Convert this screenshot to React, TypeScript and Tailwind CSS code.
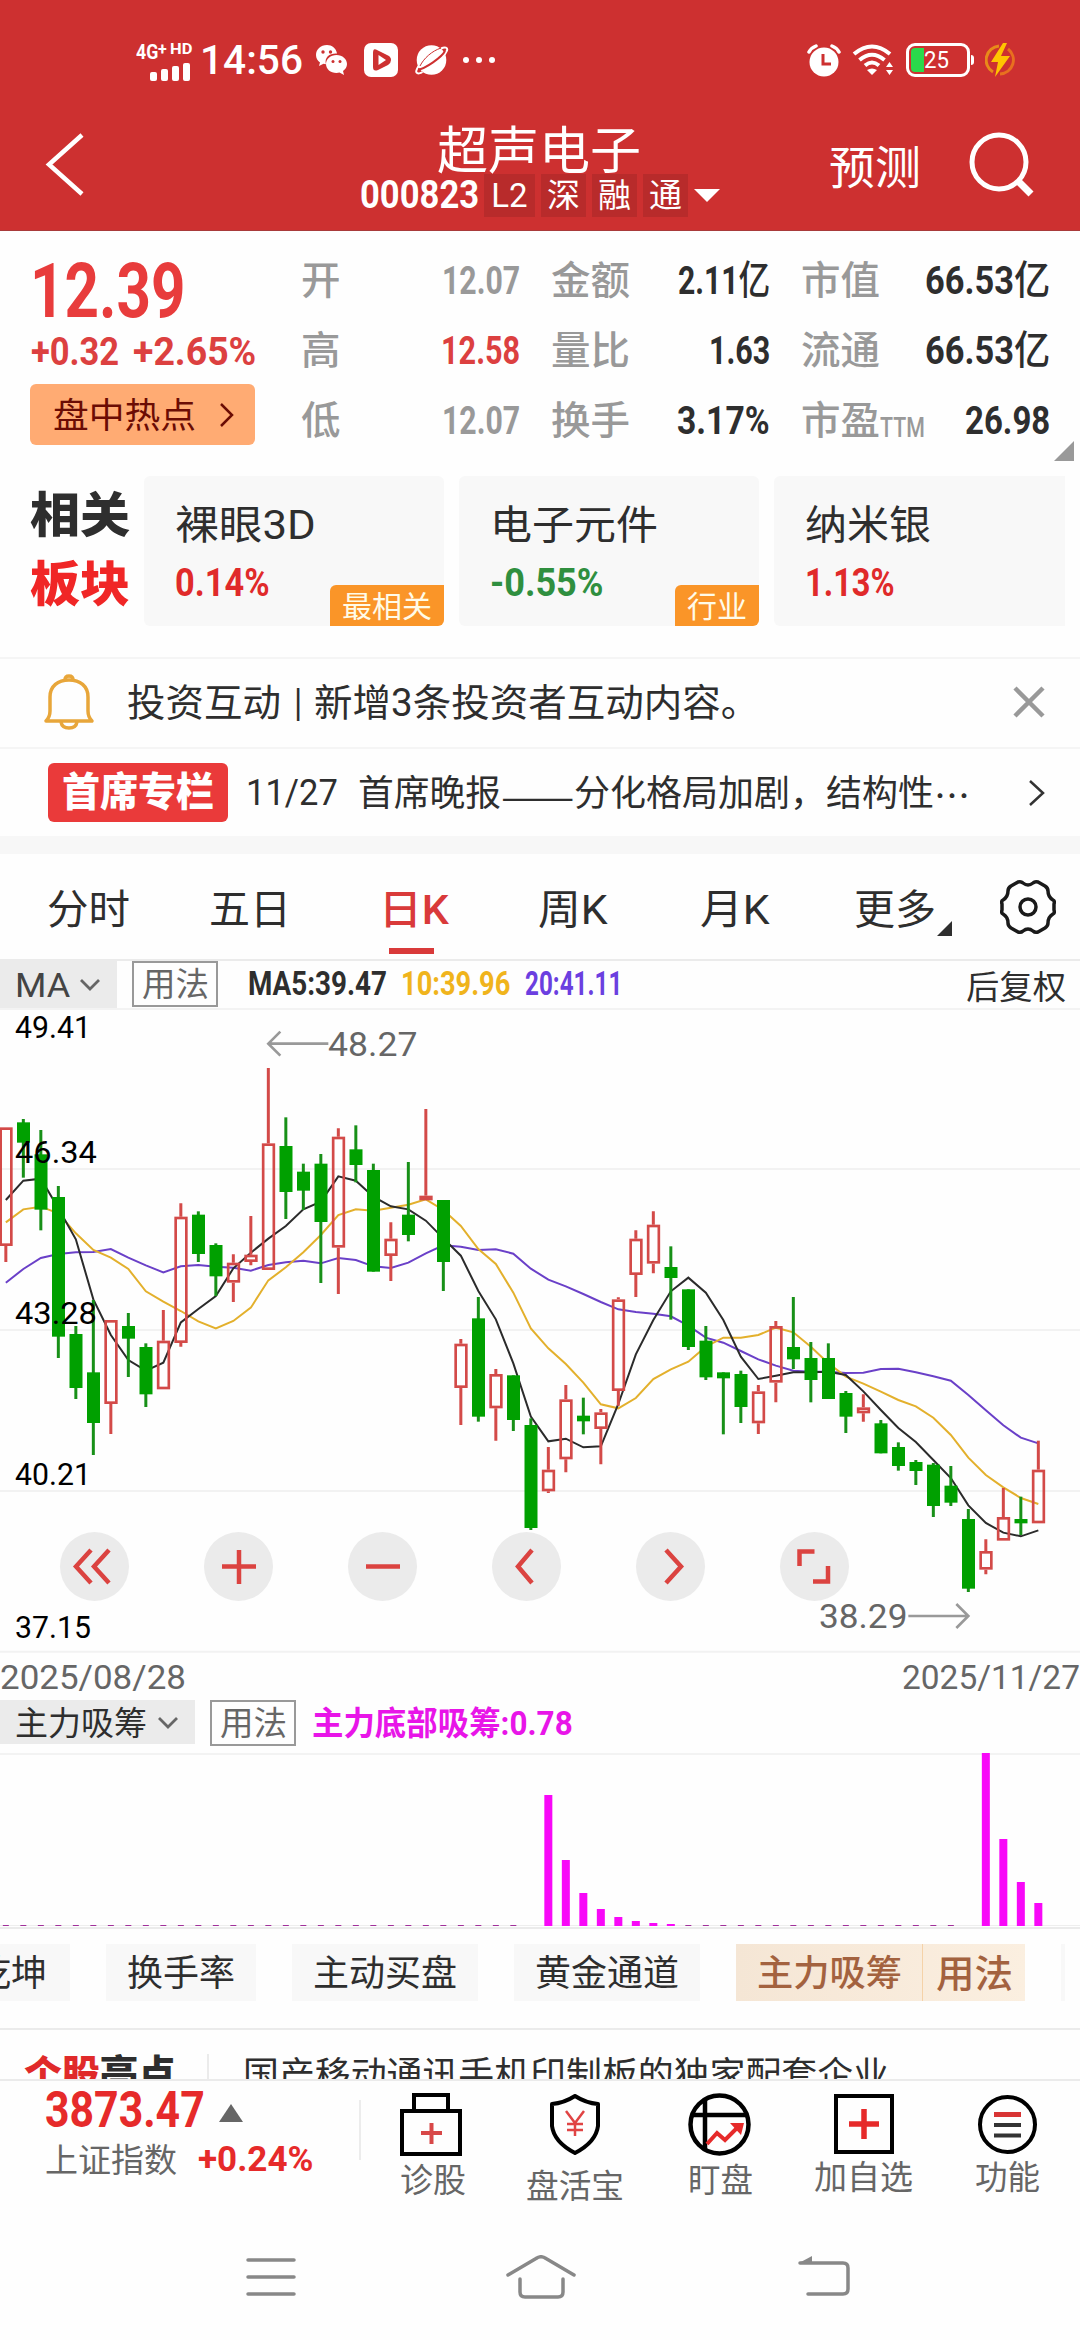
import { useLayoutEffect, useRef, useState } from "react";
import type { ReactNode } from "react";
import { clsx } from "clsx";

// One line of text, stretched or squeezed to an exact width.
function Fit({ w, className, children }: { w: number; className?: string; children: ReactNode }) {
  const ref = useRef<HTMLSpanElement>(null);
  const [scale, setScale] = useState(1);
  useLayoutEffect(() => {
    if (ref.current) setScale(w / ref.current.offsetWidth);
  }, [w]);
  return (
    <span className={clsx("flex shrink-0 leading-none", className)} style={{ width: w }}>
      <span ref={ref} className="shrink-0 origin-left whitespace-nowrap" style={{ transform: `scaleX(${scale})` }}>
        {children}
      </span>
    </span>
  );
}

function StatusBar() {
  return (
    <div className="flex h-[120px] items-center pl-[136px] text-white">
      <div className="flex h-[36px] w-[56px] flex-col justify-between">
        <div className="flex items-start font-bold">
          <Fit w={22} className="text-[21px]">4G</Fit>
          <Fit w={9} className="text-[16px]">+</Fit>
          <Fit w={22} className="ml-[3px] text-[15px]">HD</Fit>
        </div>
        <div className="mb-0.5 ml-[14px] flex items-end gap-1">
          <i className="h-[9px] w-[7px] rounded-[2px] bg-white" />
          <i className="h-[12px] w-[7px] rounded-[2px] bg-white" />
          <i className="h-[15px] w-[7px] rounded-[2px] bg-white" />
          <i className="h-[18px] w-[7px] rounded-[2px] bg-white" />
        </div>
      </div>
      <Fit w={103} className="ml-[8px] text-[41px] font-medium">14:56</Fit>
      <svg className="ml-[12px]" width="33" height="32" viewBox="0 0 33 32">
        <path d="M12 1C5.500 1 1 5.500 1 11c0 3 1.500 5.800 4 7.500L4 22l4.500-2.200 2.500.5C9 13 15 9 22 9.500 21 4 17 1 12 1Z" fill="#fff" />
        <path d="M21.500 11C15.500 11 11 15 11 20s4.500 9 10.500 9l3-.5L29 31l-1-4c2.500-1.700 4-4 4-7 0-5-4.500-9-10.500-9Z" fill="#fff" />
        <g fill="#cd3030">
          <circle cx="8" cy="8" r="1.700" /><circle cx="15.500" cy="8" r="1.700" />
          <circle cx="18" cy="17.500" r="1.500" /><circle cx="25" cy="17.500" r="1.500" />
        </g>
      </svg>
      <svg className="ml-[16px]" width="34" height="34" viewBox="0 0 34 34">
        <rect width="34" height="34" rx="7" fill="#fff" />
        <path d="M12 6.500 24 12.500q3 1.500 3 4.500t-3 5L14 27q-5 2-5-3V10q0-5 3-3.500Z" fill="#cd3030" />
        <path d="m14.500 12 7.500 5-7.500 5Z" fill="#fff" />
      </svg>
      <svg className="ml-[17px]" width="34" height="32" viewBox="0 0 34 32">
        <circle cx="16.500" cy="16" r="14.800" fill="#fff" />
        <path d="M26 4.500c4-2 7-1 6 2-1 2-2 4-4 6M5.500 20c-3 3-5 7-4 8.500s4 1 6-.5" fill="none" stroke="#fff" strokeWidth="2" />
        <path d="M3 25.500C10 25 27 13 30 7" fill="none" stroke="#cd3030" strokeWidth="2" />
        <path d="M5 22C9 14 17 7 26 4" fill="none" stroke="#cd3030" strokeWidth="1" />
      </svg>
      <div className="ml-[14px] flex gap-[7px]">
        <i className="size-[6px] rounded-full bg-white" />
        <i className="size-[6px] rounded-full bg-white" />
        <i className="size-[6px] rounded-full bg-white" />
      </div>
      <svg className="ml-[312px]" width="34" height="33" viewBox="0 0 34 33">
        <circle cx="17" cy="18" r="14.500" fill="#fff" />
        <path d="M2 8q2-4 7-6M32 8q-2-4-7-6" stroke="#fff" strokeWidth="3.500" strokeLinecap="round" fill="none" />
        <path d="M16 10v10h8" stroke="#cd3030" strokeWidth="3" fill="none" />
      </svg>
      <svg className="ml-[11px]" width="42" height="32" viewBox="0 0 42 32" fill="none" stroke="#fff" strokeWidth="4">
        <path d="M2 10Q20-5 38 10M7.500 16Q20 5.500 32.500 16M13 21.500q7-6 14 0" />
        <path d="m15 26 5 5 5-5q-5-3-10 0Z" fill="#fff" stroke="none" />
        <path d="m34 23 3.500-5 3.500 5Zm0 3h7l-3.500 5Z" fill="#fff" stroke="none" />
      </svg>
      <div className="ml-[12px] flex h-[34px] w-[64px] items-center rounded-[9px] border-[3px] border-white p-[2px]">
        <i className="h-full w-[13px] rounded-l-[4px] bg-[#2bd94b]" />
        <Fit w={25} className="text-[24px]">25</Fit>
      </div>
      <i className="ml-px h-[10px] w-[3px] rounded-r bg-white" />
      <svg className="ml-[11px]" width="30" height="34" viewBox="0 0 30 34">
        <path d="M14 3A14 14 0 0 0 8 29" fill="none" stroke="#e88a1a" strokeWidth="3" />
        <path d="M23 6a14 14 0 0 1-8 25" fill="none" stroke="#e8701f" strokeWidth="3" />
        <path d="M18 0 6 19h7l-3 15L25 13h-9l6-13Z" fill="#ffc400" />
      </svg>
    </div>
  );
}

function Header() {
  return (
    <header className="h-[231px] border-b border-[#a83a3a] bg-[#cd3030] text-white">
      <StatusBar />
      <div className="flex items-start">
        <svg className="mt-[12px] ml-[45px]" width="40" height="65" viewBox="0 0 40 65">
          <path d="M37 3 4 32.500 37 62" fill="none" stroke="#fff" strokeWidth="4.500" />
        </svg>
        <div className="ml-[275px] w-[362px]">
          <Fit w={204} className="ml-[77px] mt-[6px] text-[51px]">超声电子</Fit>
          <div className="-mt-[3px] flex items-center">
            <Fit w={119} className="text-[39px] font-bold">000823</Fit>
            <div className="ml-[5px] flex gap-[6px] text-[33px] leading-none">
              <span className="flex h-[43px] w-[51px] items-center justify-center bg-[#b82b2b]">L2</span>
              <span className="flex h-[43px] w-[45px] items-center justify-center bg-[#b82b2b]">深</span>
              <span className="flex h-[43px] w-[45px] items-center justify-center bg-[#b82b2b]">融</span>
              <span className="flex h-[43px] w-[45px] items-center justify-center bg-[#b82b2b]">通</span>
            </div>
            <svg className="ml-[6px]" width="26" height="13" viewBox="0 0 26 13"><path d="M0 0h26L13 13Z" fill="#fff" /></svg>
          </div>
        </div>
        <Fit w={92} className="mt-[25px] ml-[107px] text-[46px]">预测</Fit>
        <svg className="mt-[12px] ml-[48px]" width="66" height="66" viewBox="0 0 66 66" fill="none" stroke="#fff" strokeWidth="5">
          <circle cx="30" cy="30" r="27" /><path d="m50 50 12 12" strokeWidth="7" />
        </svg>
      </div>
    </header>
  );
}

type Cell = { label: string; value: string; w: number; tone?: string; sub?: string; unit?: string };

const quoteCols: { className: string; cells: Cell[] }[] = [
  {
    className: "w-[219px]",
    cells: [
      { label: "开", value: "12.07", w: 78, tone: "text-[#999]" },
      { label: "高", value: "12.58", w: 79, tone: "text-[#dc4040]" },
      { label: "低", value: "12.07", w: 78, tone: "text-[#999]" },
    ],
  },
  {
    className: "ml-[31px] w-[219px]",
    cells: [
      { label: "金额", value: "2.11", unit: "亿", w: 92 },
      { label: "量比", value: "1.63", w: 61 },
      { label: "换手", value: "3.17%", w: 93 },
    ],
  },
  {
    className: "ml-[31px] w-[249px]",
    cells: [
      { label: "市值", value: "66.53", unit: "亿", w: 125 },
      { label: "流通", value: "66.53", unit: "亿", w: 125 },
      { label: "市盈", value: "26.98", w: 85, sub: "TTM" },
    ],
  },
];

function Quote() {
  return (
    <section className="flex h-[245px] pl-[30px]">
      <div className="w-[271px] text-[#e83c3c]">
        <Fit w={155} className="mt-[22px] text-[76px] font-bold">12.39</Fit>
        <div className="mt-[4px] flex pl-px text-[38px] font-bold text-[#dc4040]">
          <Fit w={88}>+0.32</Fit>
          <Fit w={123} className="ml-[14px]">+2.65%</Fit>
        </div>
        <div className="mt-[13px] flex h-[61px] w-[225px] items-center rounded-md bg-[#ffab73] pl-[23px] text-[#6b0c04]">
          <Fit w={143} className="mt-[4px] text-[35px]">盘中热点</Fit>
          <svg className="ml-[24px]" width="14" height="24" viewBox="0 0 14 24"><path d="m1 1 11 11L1 23" fill="none" stroke="currentColor" strokeWidth="2.500" /></svg>
        </div>
      </div>
      {quoteCols.map((col) => (
        <div key={col.className} className={clsx("mt-[15px]", col.className)}>
          {col.cells.map((c) => (
            <div key={c.label} className="flex h-[70px] items-center">
              <Fit w={c.label.length * 39.5} className="text-[39px] font-medium text-[#999]">{c.label}</Fit>
              {c.sub && <Fit w={45} className="mt-[14px] text-[27px] font-medium text-[#999]">{c.sub}</Fit>}
              <Fit w={c.w} className={clsx("ml-auto text-[38px] font-bold", c.tone ?? "text-[#2e2e2e]")}>
                {c.value}
                {c.unit && <span className="text-[40px] font-medium">{c.unit}</span>}
              </Fit>
            </div>
          ))}
        </div>
      ))}
      <svg className="mt-[210px] ml-[4px]" width="20" height="20" viewBox="0 0 20 20"><path d="M20 0v20H0Z" fill="#999" /></svg>
    </section>
  );
}

function Sectors() {
  return (
    <section className="flex h-[181px] pl-[30px]">
      <div className="w-[114px] text-[48px] font-black">
        <Fit w={100} className="mt-[16px] text-[#2e2e2e]">相关</Fit>
        <Fit w={100} className="mt-[21px] text-[#f02626]">板块</Fit>
      </div>
      <div className="flex w-[921px] gap-[15px] overflow-hidden">
        <SectorCard name="裸眼3D" nameW={141} pct="0.14%" pctW={95} tone="text-[#e02a2a]" tag="最相关" tagCls="w-[114px]" />
        <SectorCard name="电子元件" nameW={168} pct="-0.55%" pctW={114} tone="text-[#2f8f3f]" tag="行业" tagCls="w-[84px]" />
        <SectorCard name="纳米银" nameW={126} pct="1.13%" pctW={90} tone="text-[#e02a2a]" />
      </div>
    </section>
  );
}

function SectorCard(p: { name: string; nameW: number; pct: string; pctW: number; tone: string; tag?: string; tagCls?: string }) {
  return (
    <div className="relative h-[150px] w-[300px] shrink-0 rounded-md bg-[#f8f8f8] pl-[31px]">
      <Fit w={p.nameW} className="mt-[30px] text-[40px] text-[#2e2e2e]">{p.name}</Fit>
      <Fit w={p.pctW} className={clsx("mt-[18px] text-[38px] font-bold", p.tone)}>{p.pct}</Fit>
      {p.tag && (
        <span className={clsx("absolute right-0 bottom-0 flex h-[41px] items-center justify-center rounded-tl-md rounded-br-md bg-[#fa9528] pt-[2px] text-[30px] leading-none text-[#fffbe8]", p.tagCls)}>
          {p.tag}
        </span>
      )}
    </div>
  );
}

function Notices() {
  return (
    <section className="text-[#2e2e2e]">
      <div className="flex h-[90px] items-center border-t-2 border-[#f5f5f5] pl-[43px]">
        <svg className="-mt-[3px]" width="52" height="56" viewBox="0 0 52 56" fill="none" stroke="#e8a63a" strokeWidth="3.500">
          <path d="M3 47c3-3 4-6 4-10V23C7 12 15 6 26 6s19 6 19 17v14c0 4 1 7 4 10Z" strokeLinejoin="round" />
          <path d="M22 6q0-4 4-4t4 4M18 48q1 6 8 6t8-6" />
        </svg>
        <Fit w={154} className="ml-[32px] text-[38px]">投资互动</Fit>
        <Fit w={8} className="ml-[13px] text-[38px]">|</Fit>
        <Fit w={445} className="ml-[12px] text-[38px]">新增3条投资者互动内容。</Fit>
        <svg className="-mt-[3px] ml-[253px]" width="34" height="34" viewBox="0 0 34 34"><path d="m3 3 28 28M31 3 3 31" stroke="#999" strokeWidth="4.500" /></svg>
      </div>
      <div className="flex h-[89px] items-center border-t-2 border-[#f5f5f5] pl-[48px]">
        <div className="flex h-[59px] w-[180px] items-center justify-center rounded-md bg-[#ea3a3a]">
          <Fit w={152} className="text-[40px] font-black text-white">首席专栏</Fit>
        </div>
        <Fit w={92} className="ml-[18px] text-[36px]">11/27</Fit>
        <Fit w={143} className="ml-[20px] pt-[2px] text-[36px]">首席晚报</Fit>
        <Fit w={73} className="pt-[2px] font-['Noto_Sans_CJK_SC'] text-[36px]">——</Fit>
        <Fit w={360} className="pt-[2px] text-[36px]">分化格局加剧，结构性</Fit>
        <Fit w={36} className="pt-[2px] font-['Noto_Sans_CJK_SC'] text-[36px]">…</Fit>
        <svg className="ml-[58px]" width="18" height="26" viewBox="0 0 18 26"><path d="m2 1 13 12L2 25" fill="none" stroke="#333" strokeWidth="2.500" /></svg>
      </div>
      <div className="h-[18px] bg-[#f7f7f7]" />
    </section>
  );
}

function Tabs() {
  return (
    <nav className="flex h-[107px] items-center border-b-2 border-[#ebebeb] pt-[7px] pl-[47px] text-[41px] text-[#2e2e2e]">
      <Fit w={83}>分时</Fit>
      <Fit w={82} className="ml-[79px]">五日</Fit>
      <div className="relative ml-[88px] font-medium text-[#d93a3a]">
        <Fit w={70}>日K</Fit>
        <i className="absolute top-[58px] left-[10px] h-[6px] w-[45px] bg-[#d93a3a]" />
      </div>
      <Fit w={70} className="ml-[89px]">周K</Fit>
      <Fit w={70} className="ml-[92px]">月K</Fit>
      <Fit w={82} className="ml-[84px]">更多</Fit>
      <svg className="mt-[36px] ml-px" width="15" height="15" viewBox="0 0 15 15"><path d="M15 0v15H0Z" fill="#2e2e2e" /></svg>
      <svg className="-mt-[7px] ml-[48px]" width="56" height="56" viewBox="0 0 56 56" fill="none" stroke="#1a1a1a" strokeWidth="3.500" strokeLinejoin="round">
        <path d="M18 3q3-1 5 1 5 4 10 0 2-2 5-1l7 4q3 2 3 5 0 6 5 9 2 1 1 4v6q1 3-1 4-5 3-5 9 0 3-3 5l-7 4q-3 1-5-1-5-4-10 0-2 2-5 1l-7-4q-3-2-3-5 0-6-5-9-2-1-1-4v-6q-1-3 1-4 5-3 5-9 0-3 3-5Z" />
        <circle cx="28" cy="28" r="8" />
      </svg>
    </nav>
  );
}

function Chevron() {
  return (
    <svg width="22" height="13" viewBox="0 0 22 13"><path d="m2 2 9 9 9-9" fill="none" stroke="#666" strokeWidth="2.800" /></svg>
  );
}

function Usage() {
  return (
    <div className="flex h-[46px] w-[86px] items-center justify-center border-2 border-[#999] text-[#666]">
      <Fit w={67} className="text-[33px]">用法</Fit>
    </div>
  );
}

// Plot units are thirds of a pixel, measured from the top of the plot.
// [rising, high, body top, body bottom, low]
const candles: [number, number, number, number, number][] = [
  [1, 352, 352, 708, 756], [0, 327, 337, 398, 503], [0, 360, 433, 599, 661], [0, 528, 561, 980, 1044],
  [0, 948, 972, 1134, 1167], [0, 870, 1087, 1239, 1335], [1, 930, 930, 1182, 1272], [0, 909, 948, 986, 1101],
  [0, 1000, 1011, 1153, 1191], [1, 900, 992, 1138, 1138], [1, 580, 620, 999, 1010], [0, 604, 614, 732, 756],
  [0, 700, 705, 799, 858], [1, 733, 758, 818, 876], [1, 618, 734, 756, 766], [1, 174, 400, 780, 780],
  [0, 322, 408, 546, 627], [0, 461, 485, 542, 600], [0, 432, 461, 636, 819], [1, 355, 380, 713, 852],
  [0, 346, 418, 465, 517], [0, 461, 480, 785, 785], [1, 637, 686, 738, 813], [0, 456, 614, 675, 694],
  [1, 297, 557, 571, 571], [0, 570, 570, 756, 843], [1, 987, 1001, 1134, 1245], [0, 861, 925, 1220, 1235],
  [1, 1077, 1092, 1195, 1292], [0, 1096, 1096, 1230, 1263], [0, 1225, 1245, 1554, 1560], [1, 1311, 1379, 1444, 1449],
  [1, 1125, 1168, 1348, 1387], [0, 1163, 1217, 1234, 1273], [1, 1197, 1207, 1257, 1363], [1, 862, 868, 1143, 1187],
  [1, 661, 686, 795, 861], [1, 604, 644, 761, 790], [0, 709, 771, 804, 929], [0, 838, 838, 1011, 1020],
  [0, 948, 992, 1102, 1110], [0, 1087, 1087, 1105, 1273], [0, 1082, 1092, 1191, 1239], [1, 1125, 1144, 1240, 1272],
  [1, 933, 948, 1118, 1177], [0, 861, 1011, 1048, 1077], [0, 996, 1044, 1110, 1177], [0, 1000, 1044, 1167, 1167],
  [0, 1143, 1149, 1220, 1269], [1, 1153, 1192, 1210, 1235], [0, 1230, 1240, 1330, 1330], [0, 1297, 1311, 1368, 1382],
  [0, 1350, 1356, 1383, 1425], [0, 1359, 1364, 1488, 1521], [0, 1368, 1427, 1478, 1488], [0, 1497, 1527, 1736, 1746],
  [1, 1588, 1623, 1679, 1693], [1, 1434, 1521, 1592, 1592], [0, 1460, 1527, 1540, 1575], [1, 1292, 1379, 1540, 1540],
];

const ma5 = [
  570, 512, 506, 595, 688, 868, 975, 1050, 1082, 1058, 937, 897, 858, 775, 728, 686, 648, 598, 575, 499,
  512, 560, 589, 598, 632, 685, 737, 843, 928, 1060, 1220, 1294, 1286, 1312, 1309, 1182, 1033, 930, 844, 803,
  848, 930, 1040, 1107, 1097, 1087, 1087, 1085, 1095, 1144, 1200, 1254, 1296, 1350, 1404, 1486, 1539, 1568, 1579, 1561,
];
const ma10 = [
  637, 598, 590, 610, 670, 720, 743, 777, 844, 875, 903, 934, 955, 933, 893, 811, 772, 727, 675, 615,
  598, 602, 593, 584, 568, 600, 648, 717, 762, 848, 955, 1015, 1062, 1118, 1183, 1195, 1164, 1107, 1078, 1055,
  1010, 983, 983, 975, 953, 967, 1010, 1060, 1100, 1121, 1145, 1170, 1189, 1223, 1275, 1343, 1395, 1432, 1464, 1482,
];
const ma20 = [
  818, 777, 744, 732, 727, 726, 717, 743, 766, 787, 769, 765, 770, 773, 782, 765, 757, 752, 760, 744,
  750, 769, 774, 758, 730, 706, 710, 720, 718, 731, 776, 809, 829, 852, 876, 898, 906, 911, 919, 947,
  983, 998, 1023, 1048, 1067, 1082, 1085, 1085, 1089, 1088, 1077, 1076, 1087, 1099, 1112, 1155, 1201, 1246, 1283, 1300,
];

const x = (i: number) => 17.5 + 52.5 * i;
const line = (ys: number[]) => ys.map((y, i) => `${x(i)},${y}`).join(" ");

function KLine() {
  return (
    <svg className="block" width="1080" height="643" viewBox="0 0 3240 1929" fill="none">
      <path d="M0 477H3240M0 960H3240M0 1443H3240M0 1925H3240" stroke="#f2f2f2" strokeWidth="6" />
      <polyline points={line(ma20)} stroke="#6a40c8" strokeWidth="6" />
      <polyline points={line(ma10)} stroke="#e3b02c" strokeWidth="6" />
      <polyline points={line(ma5)} stroke="#2b2b2b" strokeWidth="6" />
      {candles.map(([up, high, top, bottom, low], i) =>
        up ? (
          <g key={i} stroke="#d34a48">
            <path d={`M${x(i)} ${high}V${top}M${x(i)} ${bottom}V${low}`} strokeWidth="9" />
            <rect x={x(i) - 15.5} y={top + 4} width="32" height={Math.max(bottom - top - 8, 4)} strokeWidth="8" />
          </g>
        ) : (
          <g key={i}>
            <path d={`M${x(i)} ${high}V${low}`} stroke="#189018" strokeWidth="9" />
            <rect x={x(i) - 19} y={top} width="39" height={bottom - top} fill="#00a000" />
          </g>
        ),
      )}
      <path d="M985 101H806M841 65l-36 36 36 36" stroke="#999" strokeWidth="8" />
      <path d="M2725 1818h180M2869 1782l36 36-36 36" stroke="#999" strokeWidth="8" />
    </svg>
  );
}

const tools = [
  "M31 18 16 34.500 31 51M49 18 34 34.500 49 51",
  "M18 34.500H52M35 18V52",
  "M18 34.500H52",
  "M40 18 26 34.500 40 51",
  "M30 18 45 34.500 30 51",
  "M19.500 34V19.500H34.500M33 49.500H48V34",
];

function ChartPanel() {
  return (
    <section>
      <div className="flex h-[49px] items-start border-b-2 border-[#f3f3f3]">
        <div className="flex h-[47px] w-[117px] items-center gap-[9px] bg-[#ebebeb] pl-[15px] text-[#444]">
          <Fit w={55} className="text-[34px]">MA</Fit>
          <Chevron />
        </div>
        <div className="ml-[15px]"><Usage /></div>
        <div className="ml-[30px] flex h-[45px] items-center text-[33px] font-bold">
          <Fit w={139} className="text-[#2e2e2e]">MA5:39.47</Fit>
          <Fit w={109} className="ml-[14px] text-[#f0b41c]">10:39.96</Fit>
          <Fit w={97} className="ml-[15px] text-[#6b3fe0]">20:41.11</Fit>
        </div>
        <div className="flex h-[52px] items-center"><Fit w={100} className="ml-[344px] text-[33px] text-[#2e2e2e]">后复权</Fit></div>
      </div>
      <div className="relative">
        <KLine />
        <Fit w={76} className="absolute top-[2px] left-[15px] text-[31px] text-black">49.41</Fit>
        <Fit w={82} className="absolute top-[127px] left-[15px] text-[31px] text-black">46.34</Fit>
        <Fit w={82} className="absolute top-[288px] left-[15px] text-[31px] text-black">43.28</Fit>
        <Fit w={76} className="absolute top-[449px] left-[15px] text-[31px] text-black">40.21</Fit>
        <Fit w={76} className="absolute top-[602px] left-[15px] text-[31px] text-black">37.15</Fit>
        <Fit w={89} className="absolute top-[17px] left-[328px] text-[34px] text-[#666]">48.27</Fit>
        <Fit w={88} className="absolute top-[589px] left-[819px] text-[34px] text-[#666]">38.29</Fit>
        <div className="absolute top-[522px] left-[60px] flex gap-[75px]">
          {tools.map((d) => (
            <svg key={d} className="rounded-full bg-[#ebebeb]" width="69" height="69" viewBox="0 0 69 69">
              <path d={d} fill="none" stroke="#db4340" strokeWidth="4.500" />
            </svg>
          ))}
        </div>
      </div>
      <div className="flex h-[47px] items-center justify-between text-[34px] text-[#666]">
        <Fit w={186}>2025/08/28</Fit>
        <Fit w={178}>2025/11/27</Fit>
      </div>
    </section>
  );
}

const bars: Record<number, number> = {
  31: 131, 32: 66, 33: 33, 34: 17, 35: 9, 36: 5, 37: 3, 38: 2, 56: 173, 57: 87, 58: 44, 59: 23,
};

function Indicator() {
  return (
    <section>
      <div className="flex h-[55px] items-start border-b-2 border-[#f3f3f3]">
        <div className="flex h-[44px] w-[195px] items-center gap-[10px] bg-[#ebebeb] pl-[15px]">
          <Fit w={132} className="pt-[2px] text-[33px] text-[#2e2e2e]">主力吸筹</Fit>
          <Chevron />
        </div>
        <div className="ml-[15px]"><Usage /></div>
        <Fit w={261} className="mt-[7px] ml-[16px] text-[33px] font-bold text-[#e815e8]">主力底部吸筹:0.78</Fit>
      </div>
      <svg className="block overflow-visible" width="1080" height="174" viewBox="0 0 1080 174">
        <path d="M0 170.500H1080" stroke="#eee" strokeWidth="1" />
        <path d="M0 173H1080" stroke="#ebebeb" strokeWidth="2" />
        {candles.map((_, i) => {
          if (i === 30 || i === 55) return null;
          const h = bars[i];
          return h ? (
            <rect key={i} x={x(i) / 3 - 4} y={171 - h} width="8" height={h} fill="#f808f8" />
          ) : (
            <rect key={i} x={x(i) / 3 - 3} y="170" width="6" height="1" fill="#a0309a" />
          );
        })}
      </svg>
      <div className="flex h-[101px] items-start overflow-hidden border-b-2 border-[#ebebeb] pt-[15px] text-[36px] text-[#2e2e2e]">
        <div className="flex h-[57px] w-[70px] shrink-0 items-center justify-end bg-[#f8f8f8] pt-[3px] pr-[23px]"><Fit w={72}>乾坤</Fit></div>
        <div className="ml-[36px] flex h-[57px] w-[150px] shrink-0 items-center justify-center bg-[#f8f8f8] pt-[3px]"><Fit w={108}>换手率</Fit></div>
        <div className="ml-[36px] flex h-[57px] w-[186px] shrink-0 items-center justify-center bg-[#f8f8f8] pt-[3px]"><Fit w={144}>主动买盘</Fit></div>
        <div className="ml-[36px] flex h-[57px] w-[186px] shrink-0 items-center justify-center bg-[#f8f8f8] pt-[3px]"><Fit w={144}>黄金通道</Fit></div>
        <div className="ml-[36px] flex h-[57px] w-[289px] shrink-0 items-center bg-linear-to-r from-[#f5e6d5] to-[#fbefe0] font-medium text-[#a3623f]">
          <div className="flex h-full w-[187px] items-center justify-center border-r border-[#f5d2a8] pt-[2px]"><Fit w={145}>主力吸筹</Fit></div>
          <Fit w={77} className="ml-[13px] pt-[2px] text-[38px]">用法</Fit>
        </div>
        <div className="ml-[36px] h-[57px] w-[4px] shrink-0 bg-[#f8f8f8]" />
      </div>
      <div className="flex h-[51px] items-start overflow-hidden border-b-2 border-[#ebebeb] pl-[24px]">
        <Fit w={152} className="mt-[25px] text-[38px] font-black text-[#2e2e2e]"><span className="text-[#e02a2a]">个股</span>亮点</Fit>
        <i className="mt-[24px] ml-[31px] h-[26px] w-[2px] bg-[#ebebeb]" />
        <Fit w={646} className="mt-[28px] ml-[34px] text-[36px] text-[#2e2e2e]">国产移动通讯手机印制板的独家配套企业</Fit>
      </div>
    </section>
  );
}

function BottomBar() {
  return (
    <footer className="flex h-[140px] items-start text-[#666]">
      <div className="w-[359px] pl-[45px]">
        <div className="mt-[4px] flex items-center">
          <Fit w={160} className="text-[50px] font-bold text-[#e62a2a]">3873.47</Fit>
          <svg className="mt-[6px] ml-[14px]" width="24" height="18" viewBox="0 0 24 18"><path d="M12 0l12 18H0Z" fill="#666" /></svg>
        </div>
        <div className="mt-[7px] flex items-center">
          <Fit w={132} className="pt-px text-[33px]">上证指数</Fit>
          <Fit w={115} className="ml-[21px] text-[35px] font-bold text-[#e62a2a]">+0.24%</Fit>
        </div>
      </div>
      <i className="mt-[19px] h-[60px] w-[2px] bg-[#ececec]" />
      <div className="mt-[12px] ml-[39px] w-[65px]">
        <svg width="62" height="63" viewBox="0 0 62 63" fill="none" stroke="#000" strokeWidth="4">
          <path d="M14 18V2H48V18M2 18H60V61H2Z" /><path d="M21 40H42M31.500 30V51" stroke="#d84848" />
        </svg>
        <Fit w={66} className="mt-[8px] text-[33px]">诊股</Fit>
      </div>
      <div className="mt-[13px] ml-[61px] flex w-[98px] flex-col items-center">
        <svg width="50" height="61" viewBox="0 0 50 61" fill="none" stroke="#000" strokeWidth="4" strokeLinejoin="round">
          <path d="M25 2Q36 9 48 10V32Q46 48 25 59 4 48 2 32V10Q14 9 25 2Z" />
          <path d="m16 17 9 12 9-12M25 29V42M17 30H33M17 36H33" stroke="#e04444" strokeWidth="2.500" />
        </svg>
        <Fit w={98} className="mt-[15px] text-[33px]">盘活宝</Fit>
      </div>
      <div className="mt-[12px] ml-[64px] w-[65px]">
        <svg width="63" height="63" viewBox="0 0 63 63" fill="none" stroke="#000" strokeWidth="4.500">
          <circle cx="31.500" cy="31.500" r="29" /><path d="M4 22H59M17 6V57" />
          <path d="M19 51 29 40 37 47 51 33" stroke="#e62a2a" strokeWidth="4" /><path d="M42 30H56L53 42Z" fill="#e62a2a" stroke="none" />
        </svg>
        <Fit w={65} className="mt-[8px] text-[33px]">盯盘</Fit>
      </div>
      <div className="mt-[13px] ml-[61px] flex w-[99px] flex-col items-center">
        <svg width="60" height="60" viewBox="0 0 60 60" fill="none" stroke="#000" strokeWidth="4">
          <path d="M2 2H58V58H2Z" /><path d="M15 30H45M30 15V45" stroke="#e62a2a" strokeWidth="5.500" />
        </svg>
        <Fit w={99} className="mt-[7px] text-[33px]">加自选</Fit>
      </div>
      <div className="mt-[14px] ml-[62px] flex w-[65px] flex-col items-center">
        <svg width="59" height="59" viewBox="0 0 59 59" fill="none" stroke="#000" strokeWidth="4">
          <circle cx="29.500" cy="29.500" r="27.500" /><path d="M16 30H43M16 40.500H43" stroke="#333" />
          <path d="M16 19.500H43" stroke="#d83434" strokeWidth="5" />
        </svg>
        <Fit w={65} className="mt-[7px] text-[33px]">功能</Fit>
      </div>
    </footer>
  );
}

function SystemNav() {
  return (
    <div className="flex h-[119px] pt-[34px] pl-[246px]">
      <svg width="50" height="44" viewBox="0 0 50 44"><path d="M2 5H48M2 22H48M2 39H48" stroke="#888" strokeWidth="3.500" strokeLinecap="round" /></svg>
      <svg className="ml-[210px]" width="70" height="44" viewBox="0 0 70 44" fill="none" stroke="#888" strokeWidth="3.500" strokeLinecap="round">
        <path d="M2 20 30 3.500Q35 0 40 3.500L68 20M14 24V37q0 5 5 5H52q5 0 5-5V24" />
      </svg>
      <svg className="ml-[222px]" width="54" height="44" viewBox="0 0 54 44" fill="none" stroke="#888" strokeWidth="3.500" strokeLinecap="round">
        <path d="M2 8H45q5 0 5 5V34q0 5-5 5H10" /><path d="M14 1V8H1Z" fill="#888" stroke="none" />
      </svg>
    </div>
  );
}

export default function App() {
  return (
    <div className="h-[2340px] w-[1080px] overflow-hidden bg-[#fefefe] font-['Roboto','Noto_Sans_CJK_SC',sans-serif] leading-none">
      <Header />
      <Quote />
      <Sectors />
      <Notices />
      <Tabs />
      <ChartPanel />
      <Indicator />
      <BottomBar />
      <SystemNav />
    </div>
  );
}
